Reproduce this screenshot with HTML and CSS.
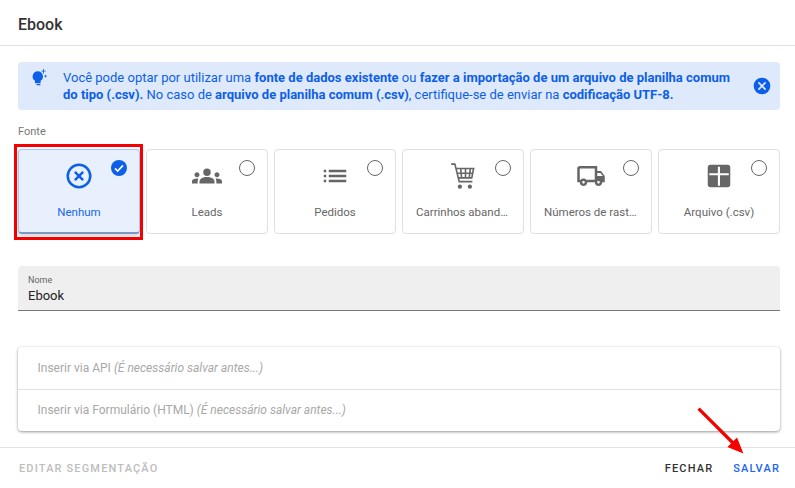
FILE: index.html
```html
<!DOCTYPE html>
<html lang="pt">
<head>
<meta charset="utf-8">
<title>Ebook</title>
<link rel="stylesheet" href="styles.css">
</head>
<body>
<div class="dialog">
  <header class="title">Ebook</header>
  <main class="content">
    <div class="alert">
      <svg class="alert-bulb" viewBox="0 0 24 24"><path d="M9 22a1 1 0 0 0 1 1h4a1 1 0 0 0 0-2h-4a1 1 0 0 0-1 1zM11 3a7.500 7.500 0 0 0-4 13.700V19a1 1 0 0 0 1 1h6a1 1 0 0 0 1-1v-2.300A7.500 7.500 0 0 0 11 3z"/><path d="M18.500 0h1.200v2.500h2.500v1.200h-2.500v2.500h-1.200V3.700H16V2.500h2.500zM21.500 8h1v1.500H24v1h-1.500V12h-1v-1.500H20v-1h1.500z"/></svg>
      <p class="alert-text">Você pode optar por utilizar uma <b>fonte de dados existente</b> ou <b>fazer a importação de um arquivo de planilha comum do tipo (.csv).</b> No caso de <b>arquivo de planilha comum (.csv)</b>, certifique-se de enviar na <b>codificação UTF-8.</b></p>
      <svg class="alert-close" viewBox="0 0 24 24"><path d="M12 2a10 10 0 1 0 0 20 10 10 0 0 0 0-20zm5 13.600L15.600 17 12 13.400 8.400 17 7 15.600 10.600 12 7 8.400 8.400 7l3.600 3.600L15.600 7 17 8.400 13.400 12z"/></svg>
    </div>

    <div class="section-label">Fonte</div>
    <div class="cards">
      <div class="card selected">
        <span class="radio-on"><svg viewBox="0 0 24 24"><circle cx="12" cy="12" r="12"/><path class="tick" d="M6 12.500l4 4 8-8.500"/></svg></span>
        <svg class="card-icon" viewBox="0 0 24 24"><path d="M12 2a10 10 0 1 0 0 20 10 10 0 0 0 0-20zm0 18a8 8 0 1 1 0-16 8 8 0 0 1 0 16zm2.600-12L12 10.600 9.400 8 8 9.400l2.600 2.600L8 14.600 9.400 16l2.600-2.600 2.600 2.600 1.400-1.400-2.600-2.600L16 9.400z"/></svg>
        <span class="card-label">Nenhum</span>
      </div>
      <div class="card">
        <span class="radio"></span>
        <svg class="card-icon" viewBox="0 0 24 24"><path d="M12 12.800c1.600 0 3.100.4 4.300.9 1.100.5 1.700 1.600 1.700 2.800V18H6v-1.500c0-1.200.7-2.300 1.800-2.800 1.100-.5 2.500-.9 4.200-.9zM4 13c1.100 0 2-.9 2-2s-.9-2-2-2-2 .9-2 2 .9 2 2 2zm1.100 1.100C4.800 14 4.400 14 4 14c-1 0-1.900.2-2.800.6C.5 14.900 0 15.600 0 16.400V18h4.500v-1.500c0-.9.200-1.700.6-2.400zM20 13c1.100 0 2-.9 2-2s-.9-2-2-2-2 .9-2 2 .9 2 2 2zm4 3.400c0-.8-.5-1.500-1.200-1.800-.9-.4-1.800-.6-2.800-.6-.4 0-.8 0-1.100.1.400.7.600 1.500.6 2.400V18H24zM12 6a3 3 0 1 1 0 6 3 3 0 0 1 0-6z"/></svg>
        <span class="card-label">Leads</span>
      </div>
      <div class="card">
        <span class="radio"></span>
        <svg class="card-icon" viewBox="0 0 24 24"><path d="M3 13h2v-2H3zm0 4h2v-2H3zm0-8h2V7H3zm4 4h14v-2H7zm0 4h14v-2H7zM7 7v2h14V7z"/></svg>
        <span class="card-label">Pedidos</span>
      </div>
      <div class="card">
        <span class="radio"></span>
        <svg class="card-icon" viewBox="0 0 24 24"><path class="cart-line" d="M2.500 2.500h3l3.500 14h10.500M6.500 6h14l-1.500 7.500H8.500M10.200 6.500l.6 6.500M14 6.500v6.500M17.800 6.500l-.8 6.500M7.200 9.800h12.600"/><circle cx="9.500" cy="20.500" r="1.700"/><circle cx="17.500" cy="20.500" r="1.700"/></svg>
        <span class="card-label">Carrinhos abandonados</span>
      </div>
      <div class="card">
        <span class="radio"></span>
        <svg class="card-icon" viewBox="0 0 24 24"><path d="M20 8h-3V4H3c-1.100 0-2 .9-2 2v11h2c0 1.700 1.300 3 3 3s3-1.300 3-3h6c0 1.700 1.300 3 3 3s3-1.300 3-3h2v-5zm-.5 1.500l2 2.500H17V9.500zM6 18c-.6 0-1-.4-1-1s.4-1 1-1 1 .4 1 1-.4 1-1 1zm2.200-3c-.5-.6-1.300-1-2.200-1s-1.700.4-2.200 1H3V6h12v9zM18 18c-.6 0-1-.4-1-1s.4-1 1-1 1 .4 1 1-.4 1-1 1z"/></svg>
        <span class="card-label">Números de rastreio</span>
      </div>
      <div class="card">
        <span class="radio"></span>
        <svg class="card-icon" viewBox="0 0 24 24"><path d="M5 3h14c1.100 0 2 .9 2 2v14c0 1.100-.9 2-2 2H5c-1.100 0-2-.9-2-2V5c0-1.100.9-2 2-2zm6.100 1.500v5.200H4.200v1.700h6.900v8.400h1.700v-8.400h7V9.700h-7V4.500z" fill-rule="evenodd"/></svg>
        <span class="card-label">Arquivo (.csv)</span>
      </div>
    </div>

    <div class="field">
      <span class="field-label">Nome</span>
      <span class="field-value">Ebook</span>
    </div>

    <div class="panels">
      <div class="panel-row">Inserir via API <i>(É necessário salvar antes...)</i></div>
      <div class="panel-row second">Inserir via Formulário (HTML) <i>(É necessário salvar antes...)</i></div>
    </div>
  </main>
  <footer class="actions">
    <span class="btn disabled">EDITAR SEGMENTAÇÃO</span>
    <span class="btn close">FECHAR</span>
    <span class="btn save">SALVAR</span>
  </footer>
  <div class="mark-box"></div>
  <svg class="mark-arrow" viewBox="0 0 60 60"><path d="M2 2L50 50" /><polygon points="58,58 38,50 50,38"/></svg>
</div>
</body>
</html>
```
FILE: styles.css
```css
* { box-sizing: border-box; }
html, body { margin: 0; padding: 0; background: #fff; }
body { font-family: Roboto, "Liberation Sans", sans-serif; color: #444; }
.dialog { position: relative; width: 795px; height: 488px; overflow: hidden; display: flex; flex-direction: column; }
.title { height: 46px; padding: 15px 18px 0; font-size: 16px; line-height: 20px; font-weight: 500; color: #333; border-bottom: 1px solid #e2e2e2; }
.content { flex: 1; padding: 16px 15px 0 18px; }
.alert { height: 48px; display: flex; align-items: center; background: #deeafc; border-radius: 4px; color: #0d5ee8; padding: 0 8px 0 12px; }
.alert-bulb { width: 17px; height: 17px; fill: #0d5ee8; flex: none; margin: -18px 16px 0 0; }
.alert-text { margin: 0; flex: 1; font-size: 13px; line-height: 17px; padding-right: 12px; }
.alert-text b { font-weight: 700; }
.alert-close { width: 20px; height: 20px; fill: #0d5ee8; flex: none; }
.section-label { margin-top: 15px; font-size: 11px; line-height: 13px; color: #777; }
.cards { margin-top: 11px; display: grid; grid-template-columns: repeat(6, 122px); column-gap: 6px; }
.card { position: relative; height: 85px; background: #fff; border: 1px solid #e0e0e0; border-radius: 4px; display: flex; flex-direction: column; align-items: center; color: #666; }
.card-icon { width: 30px; height: 30px; margin-top: 11px; fill: #666; }
.card-label { margin-top: 13px; width: 100%; padding: 0 13px; text-align: center; font-size: 11.500px; line-height: 16px; white-space: nowrap; overflow: hidden; text-overflow: ellipsis; }
.radio { position: absolute; top: 10px; right: 12px; width: 16px; height: 16px; border: 1.500px solid #666; border-radius: 50%; }
.radio-on { position: absolute; top: 10px; right: 12px; width: 16px; height: 16px; }
.radio-on svg { display: block; width: 16px; height: 16px; fill: #0d5ee8; }
.tick { fill: none; stroke: #fff; stroke-width: 2.500; }
.cart-line { fill: none; stroke: #666; stroke-width: 1.300; }
.card.selected { background: #e8f0fd; border-color: #a9c4f0; border-bottom: 2px solid #7d97c4; color: #1a66ee; box-shadow: 0 2px 5px rgba(0,0,0,.2); }
.card.selected .card-icon { fill: #0d5ee8; }
.field { margin-top: 32px; height: 45px; background: #efefef; border-bottom: 1px solid #777; border-radius: 4px 4px 0 0; padding: 9px 10px 0; display: flex; flex-direction: column; }
.field-label { font-size: 9px; line-height: 11px; color: #666; }
.field-value { font-size: 13px; line-height: 18px; color: #222; margin-top: 1px; }
.panels { margin-top: 36px; border-radius: 4px; box-shadow: 0 1px 3px rgba(0,0,0,.4), 0 0 2px rgba(0,0,0,.06); background: #fff; }
.panel-row { height: 42px; padding: 0 19.500px; display: flex; align-items: center; font-size: 12px; color: #a8a8a8; gap: 3px; }
.panel-row.second { border-top: 1px solid #e2e2e2; padding-bottom: 2px; }
.panel-row i { color: #a8a8a8; }
.actions { height: 41px; border-top: 1px solid #e2e2e2; display: flex; align-items: center; padding: 1px 15px 0 19px; }
.btn { font-size: 11px; font-weight: 500; letter-spacing: 1.150px; line-height: 14px; }
.disabled { color: #bdbdbd; margin-right: auto; }
.close { color: #333; margin-right: 20px; }
.save { color: #1a66ee; }
.mark-box { position: absolute; left: 14px; top: 144px; width: 129px; height: 96px; border: 3px solid #f50000; }
.mark-arrow { position: absolute; left: 697px; top: 407px; width: 48px; height: 48px; }
.mark-arrow path { stroke: #f50000; stroke-width: 4; fill: none; }
.mark-arrow polygon { fill: #f50000; }
```
